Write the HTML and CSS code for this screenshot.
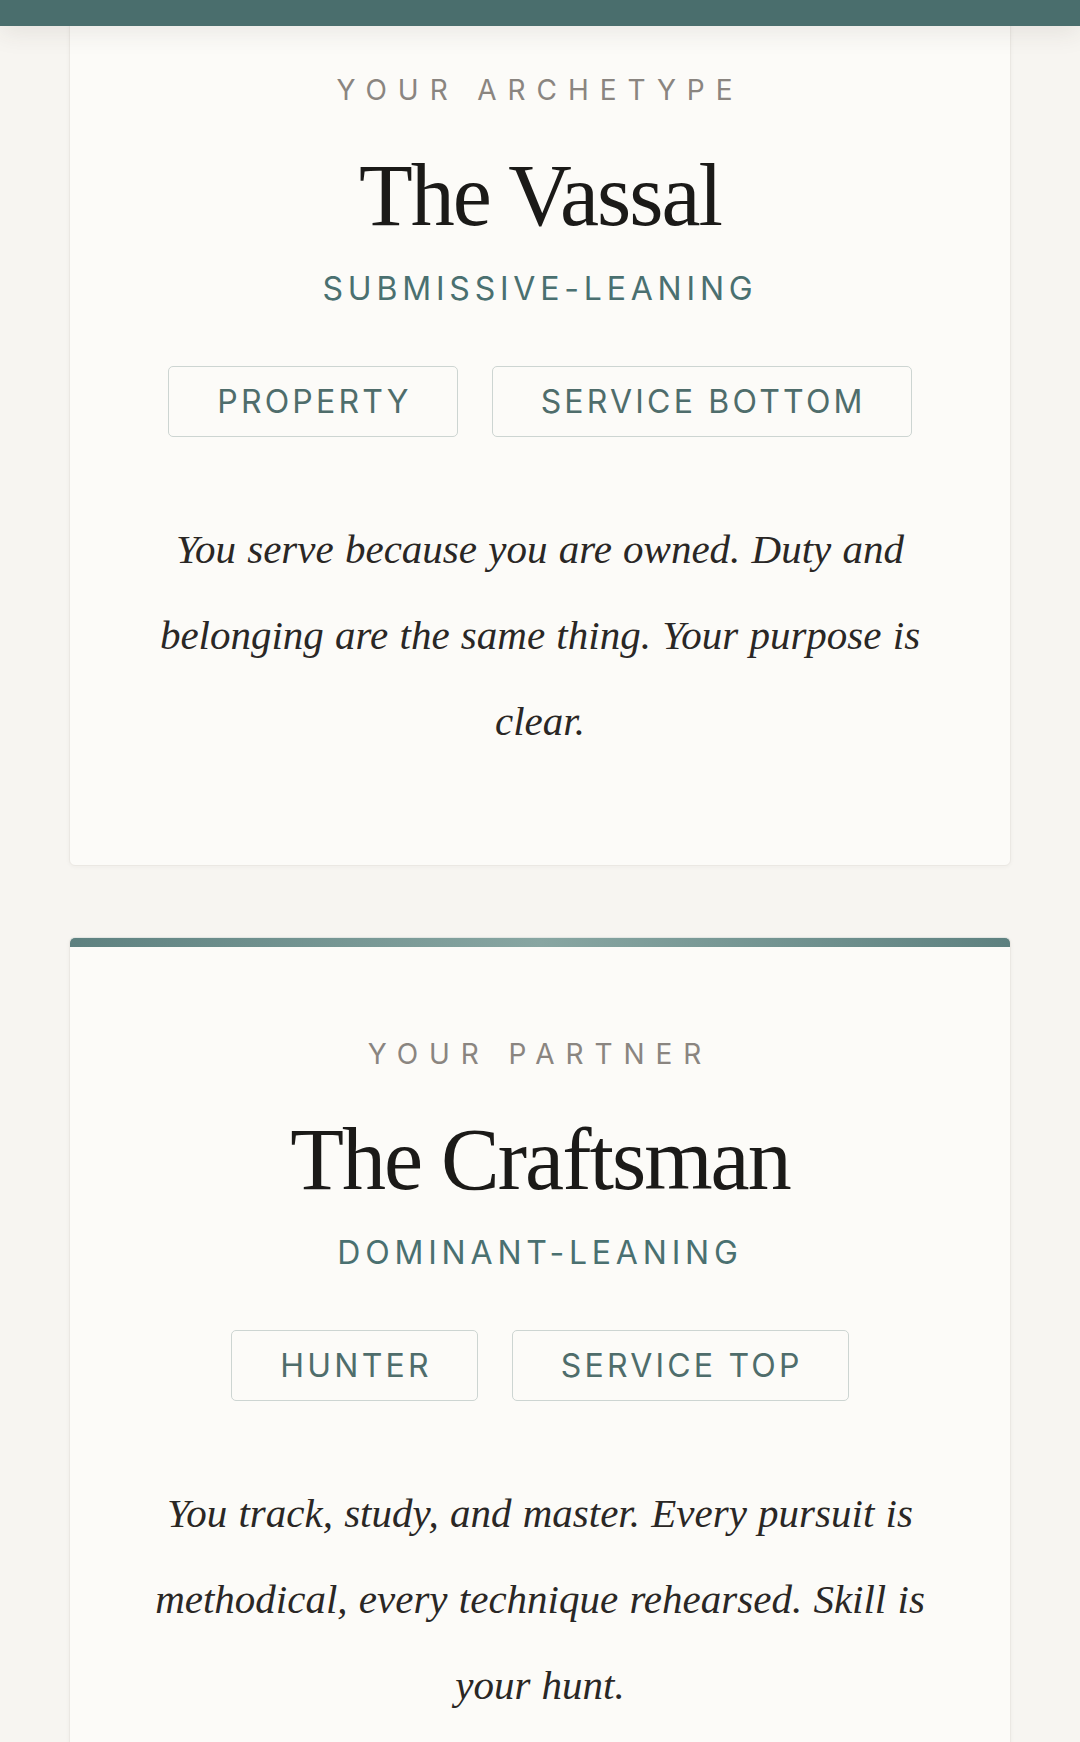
FILE: index.html
```html
<!DOCTYPE html>
<html lang="en">
<head>
<meta charset="utf-8">
<title>Your Archetype</title>
<link rel="stylesheet" href="styles.css">
</head>
<body>
<header class="topbar"></header>
<main class="results">
  <section class="card">
    <p class="card-label">Your Archetype</p>
    <h1 class="card-title">The Vassal</h1>
    <p class="card-lean">Submissive-Leaning</p>
    <div class="tags">
      <span class="tag">Property</span>
      <span class="tag">Service Bottom</span>
    </div>
    <p class="card-desc">You serve because you are owned. Duty and belonging are the same thing. Your purpose is clear.</p>
  </section>
  <section class="card card--accent">
    <p class="card-label">Your Partner</p>
    <h2 class="card-title">The Craftsman</h2>
    <p class="card-lean">Dominant-Leaning</p>
    <div class="tags">
      <span class="tag">Hunter</span>
      <span class="tag">Service Top</span>
    </div>
    <p class="card-desc">You track, study, and master. Every pursuit is methodical, every technique rehearsed. Skill is your hunt.</p>
  </section>
</main>
</body>
</html>
```
FILE: styles.css
```css
* { box-sizing: border-box; }
html, body { margin: 0; padding: 0; }
body {
  background: #f7f5f1;
  font-family: "Inter", "Noto Sans", sans-serif;
  color: #1d1b19;
  overflow: hidden;
}
.topbar {
  position: fixed;
  top: 0; left: 0; right: 0;
  height: 26px;
  background: #4a6e6d;
  box-shadow: 0 6px 26px rgba(60, 50, 40, 0.10);
  z-index: 10;
}
.results {
  padding: 0 69px;
  display: flex;
  flex-direction: column;
  gap: 71px;
}
.card {
  background: #fcfbf8;
  border: 1px solid #ebe8e3;
  border-radius: 6px;
  padding: 103px 83px 101px;
  text-align: center;
  display: flex;
  flex-direction: column;
  align-items: center;
  box-shadow: 0 1px 4px rgba(60, 50, 40, 0.04);
}
.card:first-child { margin-top: -31px; }
.card--accent {
  padding-top: 99px;
  background: linear-gradient(90deg, #5e8180 0%, #88a6a2 50%, #5e8180 100%) top / 100% 9px no-repeat, #fcfbf8;
  border-top-color: #e3e6e3;
}
.card-label {
  margin: 0;
  font-size: 28px;
  line-height: 34px;
  letter-spacing: 0.39em;
  text-transform: uppercase;
  color: #8a8580;
  font-weight: 400;
}
.card-title {
  margin: 40px 0 0;
  font-family: "Liberation Serif", "Times New Roman", serif;
  font-weight: 400;
  font-size: 88px;
  line-height: 97px;
  letter-spacing: -2px;
  color: #1b1a18;
}
.card-lean {
  margin: 25px 0 0;
  font-size: 32px;
  line-height: 40px;
  letter-spacing: 0.15em;
  text-transform: uppercase;
  color: #4a7070;
  font-weight: 400;
}
.tags {
  margin-top: 57px;
  display: flex;
  gap: 34px;
  justify-content: center;
}
.tag {
  display: inline-flex;
  align-items: center;
  justify-content: center;
  height: 71px;
  padding: 0 45px 0 48px;
  border: 1.5px solid #cdd5d2;
  border-radius: 5px;
  font-size: 32px;
  letter-spacing: 0.1em;
  text-transform: uppercase;
  color: #4f6d6b;
  font-weight: 400;
}
.card-desc {
  margin: 69px 0 0;
  font-family: "Liberation Serif", "Times New Roman", serif;
  font-style: italic;
  font-size: 41px;
  line-height: 86px;
  word-spacing: 1px;
  color: #2a2725;
}
```
